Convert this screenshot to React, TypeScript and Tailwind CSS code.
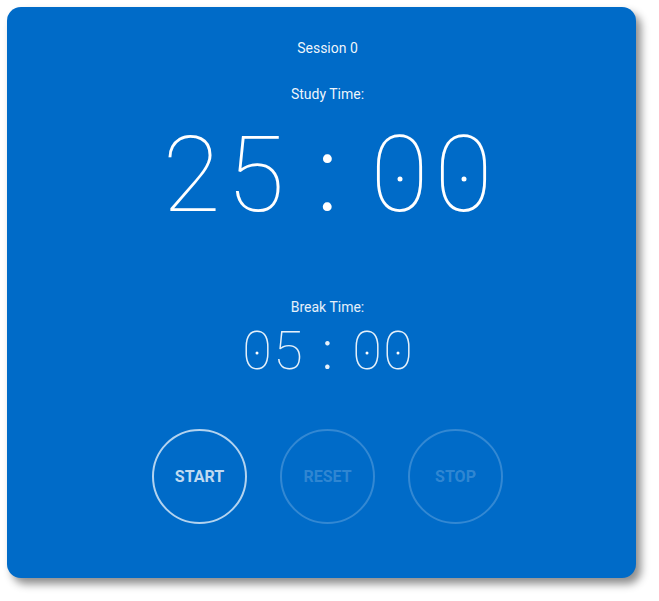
import React from "react";

function Digit({ ch, w, dot }: { ch: string; w: string; dot?: string }) {
  return (
    <span className={"relative inline-block text-center " + w}>
      {ch}
      {dot ? (
        <span
          className={
            "absolute left-1/2 top-[54%] -translate-x-1/2 -translate-y-1/2 rounded-full bg-white " + dot
          }
        />
      ) : null}
    </span>
  );
}

export default function App() {
  return (
    <div className="w-[659px] h-[601px] bg-white">
      <div
        className="ml-[7px] mt-[7px] w-[629px] h-[571px] rounded-[14px] bg-[#006bc8] shadow-[5px_6px_8px_rgba(0,0,0,0.45)] flex flex-col items-center pl-[12px] text-white"
        style={{ fontFamily: "Roboto, 'Noto Sans', sans-serif" }}
      >
        <div className="mt-[31px] h-[20px] leading-[20px] text-[14px] text-white/95">Session 0</div>
        <div className="mt-[26px] h-[20px] leading-[20px] text-[14px] text-white/95">Study Time:</div>
        <div className="mt-[18px] h-[106px] leading-none text-[106px] font-thin whitespace-nowrap flex">
          <Digit ch="2" w="w-[64px]" />
          <Digit ch="5" w="w-[64px]" />
          <span className="inline-block w-[80px] text-center font-light">:</span>
          <Digit ch="0" w="w-[64px]" dot="w-[5px] h-[5px]" />
          <Digit ch="0" w="w-[64px]" dot="w-[5px] h-[5px]" />
        </div>
        <div className="mt-[69px] h-[20px] leading-[20px] text-[14px] text-white/90">Break Time:</div>
        <div className="mt-[7px] h-[54px] leading-none text-[54px] font-thin whitespace-nowrap flex text-white/90">
          <Digit ch="0" w="w-[31px]" dot="w-[3px] h-[3px]" />
          <Digit ch="5" w="w-[31px]" />
          <span className="inline-block w-[48px] text-center font-light">:</span>
          <Digit ch="0" w="w-[31px]" dot="w-[3px] h-[3px]" />
          <Digit ch="0" w="w-[31px]" dot="w-[3px] h-[3px]" />
        </div>
        <div className="mt-[51px] flex gap-[33px]">
          <button className="w-[95px] h-[95px] rounded-full border-2 border-white/70 text-white/75 text-[16px] font-bold">
            START
          </button>
          <button className="w-[95px] h-[95px] rounded-full border-2 border-white/20 text-white/20 text-[16px] font-bold">
            RESET
          </button>
          <button className="w-[95px] h-[95px] rounded-full border-2 border-white/20 text-white/20 text-[16px] font-bold">
            STOP
          </button>
        </div>
      </div>
    </div>
  );
}
